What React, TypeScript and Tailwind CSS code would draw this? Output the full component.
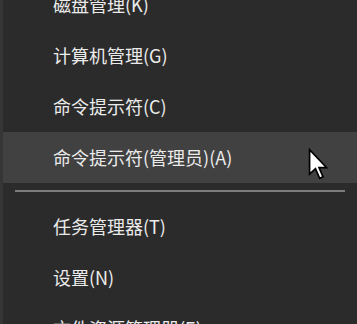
const topItems = ["磁盘管理(K)", "计算机管理(G)", "命令提示符(C)"];
const bottomItems = ["任务管理器(T)", "设置(N)", "文件资源管理器(E)"];

function Row({ label, active }: { label: string; active?: boolean }) {
  return (
    <div
      className={
        "h-[51px] flex items-center pl-[50px] text-[18px] text-[#ebebeb] " +
        (active ? "bg-[#414141]" : "")
      }
    >
      {label}
    </div>
  );
}

function Cursor() {
  return (
    <svg
      className="absolute left-[304px] top-[148px]"
      width="22"
      height="32"
      viewBox="0 0 12 19"
    >
      <path
        d="M1 1 L1 15.5 L4.5 12.3 L7 18 L9 17.1 L6.6 11.6 L11 11.6 Z"
        fill="#ffffff"
        stroke="#000000"
        strokeWidth="1"
        strokeLinejoin="miter"
      />
    </svg>
  );
}

export default function App() {
  return (
    <div
      className="relative w-[357px] h-[324px] overflow-hidden bg-[#2b2b2b] border-l-[3px] border-[#363636]"
      style={{ fontFamily: '"Noto Sans CJK SC", "Noto Sans", sans-serif' }}
    >
      <div className="-mt-[21px]">
        {topItems.map((t) => (
          <Row key={t} label={t} />
        ))}
        <Row label="命令提示符(管理员)(A)" active />
        <div className="h-[18px] pt-[7px] px-[12px]">
          <div className="h-[2px] bg-[#7c7c7c]" />
        </div>
        {bottomItems.map((t) => (
          <Row key={t} label={t} />
        ))}
      </div>
      <Cursor />
    </div>
  );
}
